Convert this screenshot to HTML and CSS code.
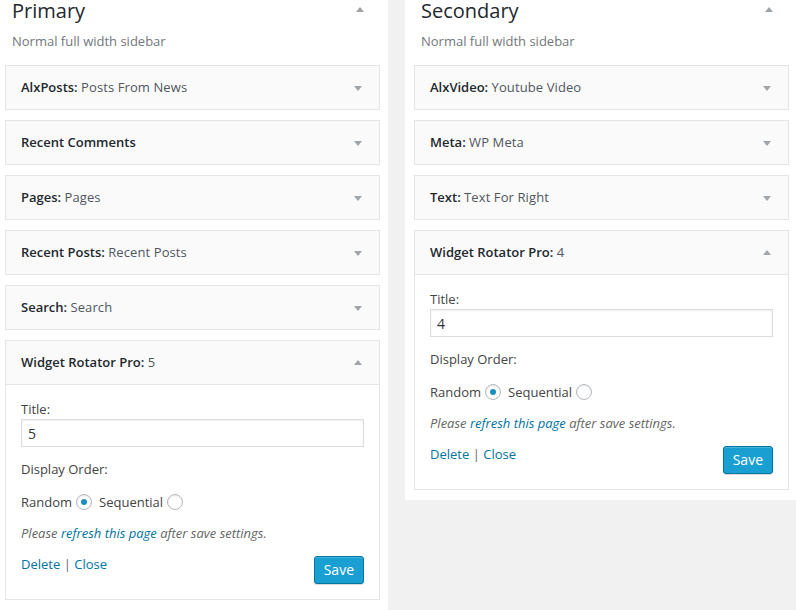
FILE: index.html
```html
<!DOCTYPE html>
<html lang="en">
<head>
    <meta charset="UTF-8">
    <meta name="viewport" content="width=device-width, initial-scale=1.0">
    <title>Widgets</title>
    <link rel="stylesheet" href="styles.css">
</head>
<body>
    <div class="sidebars">

        <div class="sidebar sidebar-left">
            <div class="sidebar-name">
                <h2>Primary</h2>
                <span class="toggle up"></span>
            </div>
            <p class="sidebar-desc">Normal full width sidebar</p>

            <div class="widget">
                <div class="widget-top"><h3>AlxPosts: <span class="in-title">Posts From News</span></h3><span class="toggle"></span></div>
            </div>
            <div class="widget">
                <div class="widget-top"><h3>Recent Comments</h3><span class="toggle"></span></div>
            </div>
            <div class="widget">
                <div class="widget-top"><h3>Pages: <span class="in-title">Pages</span></h3><span class="toggle"></span></div>
            </div>
            <div class="widget">
                <div class="widget-top"><h3>Recent Posts: <span class="in-title">Recent Posts</span></h3><span class="toggle"></span></div>
            </div>
            <div class="widget">
                <div class="widget-top"><h3>Search: <span class="in-title">Search</span></h3><span class="toggle"></span></div>
            </div>
            <div class="widget open">
                <div class="widget-top"><h3>Widget Rotator Pro: <span class="in-title">5</span></h3><span class="toggle up"></span></div>
                <div class="widget-inside">
                    <label class="field-label" for="title-5">Title:</label>
                    <input class="text-input" id="title-5" type="text" value="5">
                    <div class="field-label order">Display Order:</div>
                    <div class="radio-row">
                        <label>Random <input type="radio" name="order-5" checked></label>
                        <label>Sequential <input type="radio" name="order-5"></label>
                    </div>
                    <p class="note">Please <a href="#">refresh this page</a> after save settings.</p>
                    <div class="actions">
                        <div class="links"><a href="#">Delete</a> <span class="sep">|</span> <a href="#">Close</a></div>
                        <button class="save">Save</button>
                    </div>
                </div>
            </div>
        </div>

        <div class="sidebar sidebar-right">
            <div class="sidebar-name">
                <h2>Secondary</h2>
                <span class="toggle up"></span>
            </div>
            <p class="sidebar-desc">Normal full width sidebar</p>

            <div class="widget">
                <div class="widget-top"><h3>AlxVideo: <span class="in-title">Youtube Video</span></h3><span class="toggle"></span></div>
            </div>
            <div class="widget">
                <div class="widget-top"><h3>Meta: <span class="in-title">WP Meta</span></h3><span class="toggle"></span></div>
            </div>
            <div class="widget">
                <div class="widget-top"><h3>Text: <span class="in-title">Text For Right</span></h3><span class="toggle"></span></div>
            </div>
            <div class="widget open">
                <div class="widget-top"><h3>Widget Rotator Pro: <span class="in-title">4</span></h3><span class="toggle up"></span></div>
                <div class="widget-inside">
                    <label class="field-label" for="title-4">Title:</label>
                    <input class="text-input" id="title-4" type="text" value="4">
                    <div class="field-label order">Display Order:</div>
                    <div class="radio-row">
                        <label>Random <input type="radio" name="order-4" checked></label>
                        <label>Sequential <input type="radio" name="order-4"></label>
                    </div>
                    <p class="note">Please <a href="#">refresh this page</a> after save settings.</p>
                    <div class="actions">
                        <div class="links"><a href="#">Delete</a> <span class="sep">|</span> <a href="#">Close</a></div>
                        <button class="save">Save</button>
                    </div>
                </div>
            </div>
        </div>

    </div>
</body>
</html>
```

FILE: styles.css
```css
body {
    margin: 0;
    background: #f1f1f1;
    font-family: 'Open Sans', sans-serif;
    font-size: 13px;
    line-height: 18px;
    color: #444;
    overflow: hidden;
}
a {
    color: #0074a2;
    text-decoration: none;
}

.sidebars {
    display: grid;
    grid-template-columns: 392px 392px;
    column-gap: 17px;
    align-items: start;
    margin-left: -4px;
}
.sidebar {
    background: #fff;
    padding: 0 8px 10px 9px;
}

.sidebar-name {
    position: relative;
    padding-top: 2px;
}
.sidebar-name h2 {
    margin: 0;
    padding-left: 7px;
    font-size: 20px;
    line-height: 18px;
    font-weight: 400;
    color: #23282d;
}
.sidebar-name .toggle {
    right: 16px;
    top: 7px;
}
.sidebar-desc {
    margin: 12px 0 15px;
    padding-left: 7px;
    color: #72777c;
}

/* small triangle arrows */
.toggle {
    position: absolute;
    width: 0;
    height: 0;
    border-left: 4px solid transparent;
    border-right: 4px solid transparent;
    border-top: 5px solid #a0a5aa;
}
.toggle.up {
    border-top: 0;
    border-bottom: 5px solid #a0a5aa;
}

.widget {
    border: 1px solid #e5e5e5;
    background: #fafafa;
    margin-bottom: 10px;
}
.widget:last-child {
    margin-bottom: 0;
}
.widget-top {
    position: relative;
    height: 42px;
    display: flex;
    align-items: center;
    padding: 0 15px 1px;
}
.widget-top h3 {
    margin: 0;
    font-size: 13px;
    font-weight: 600;
    color: #23282d;
}
.in-title {
    font-weight: 400;
    color: #50575e;
    letter-spacing: 0.1px;
}
.widget-top .toggle {
    right: 17px;
    top: 20px;
}
.widget-top .toggle.up {
    top: 19px;
}

.open .widget-top {
    border-bottom: 1px solid #e5e5e5;
}
.widget-inside {
    background: #fff;
    padding: 0 15px 15px;
    display: flex;
    flex-direction: column;
}
.field-label {
    display: block;
    margin-top: 15px;
}
.field-label.order {
    margin-top: 13px;
}
.text-input {
    margin: 1px 0 0;
    height: 28px;
    box-sizing: border-box;
    padding: 2px 6px;
    border: 1px solid #ddd;
    box-shadow: inset 0 1px 2px rgba(0, 0, 0, 0.07);
    font-family: inherit;
    font-size: 14px;
    color: #32373c;
    outline: none;
}

.radio-row {
    display: flex;
    align-items: center;
    margin-top: 14px;
    height: 20px;
}
.radio-row label {
    display: flex;
    align-items: center;
    margin-right: 7px;
}
.radio-row input {
    appearance: none;
    -webkit-appearance: none;
    width: 16px;
    height: 16px;
    margin: 0 0 0 4px;
    border: 1px solid #b4b9be;
    border-radius: 50%;
    background: #fff;
    box-shadow: inset 0 1px 2px rgba(0, 0, 0, 0.1);
    display: flex;
    align-items: center;
    justify-content: center;
}
.radio-row input:checked::before {
    content: '';
    width: 6px;
    height: 6px;
    border-radius: 50%;
    background: #1e8cbe;
}

.note {
    margin: 12px 0 0;
    font-style: italic;
    color: #666;
}
.actions {
    display: flex;
    justify-content: space-between;
    align-items: flex-start;
    margin-top: 13px;
}
.sep {
    color: #666;
}
.save {
    margin-top: 1px;
    height: 28px;
    padding: 0 9px 1px;
    background: #1a9fd3;
    border: 1px solid #0074a2;
    border-radius: 3px;
    box-shadow: inset 0 1px 0 rgba(120, 200, 230, 0.5), 0 1px 0 rgba(0, 0, 0, 0.15);
    color: #fff;
    font-family: inherit;
    font-size: 14px;
    cursor: pointer;
}
```
